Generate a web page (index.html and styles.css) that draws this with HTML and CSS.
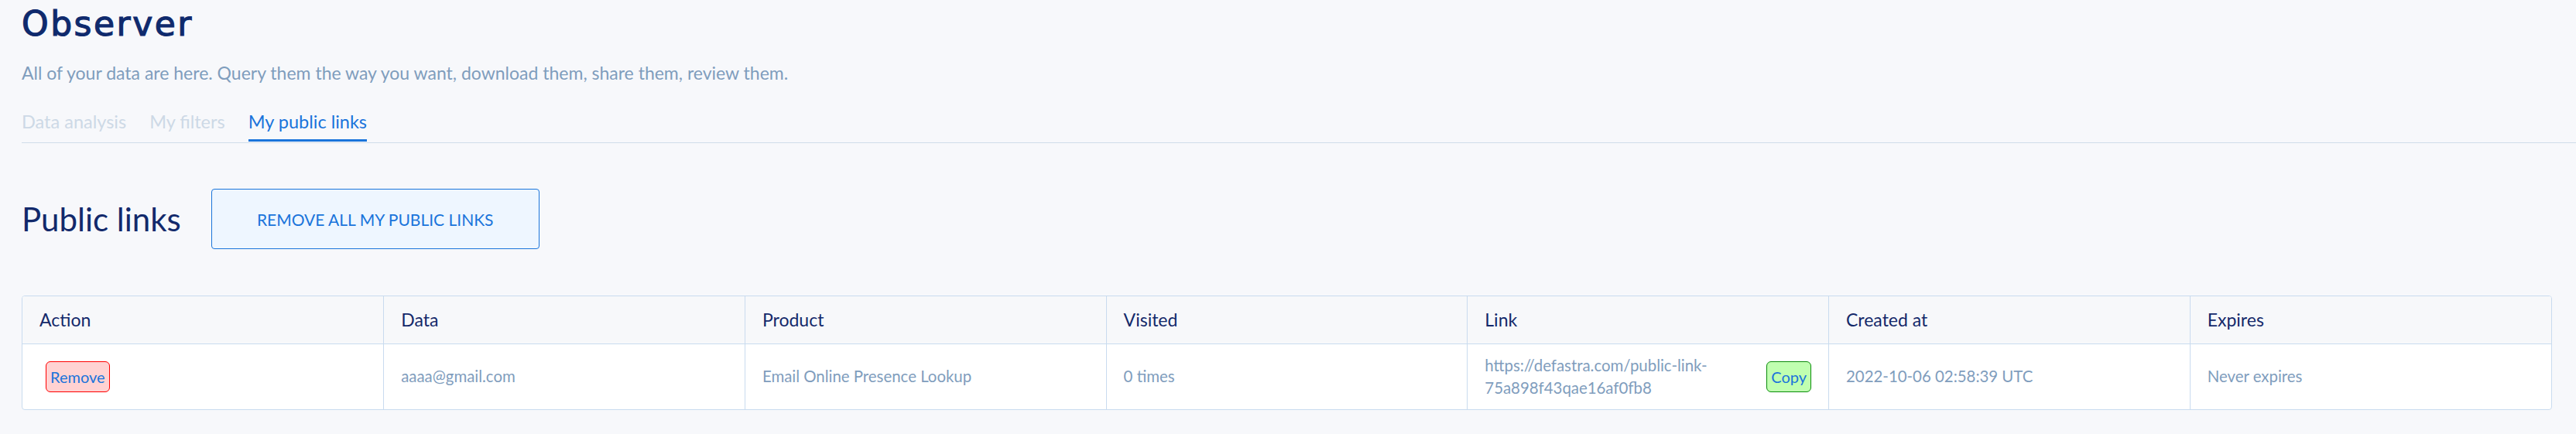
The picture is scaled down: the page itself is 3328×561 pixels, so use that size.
FILE: index.html
```html
<!DOCTYPE html>
<html lang="en">
<head>
<meta charset="utf-8">
<title>Observer</title>
<link rel="stylesheet" href="styles.css">
</head>
<body>
<main class="page">
  <header class="page-head">
    <h1 class="title">Observer</h1>
    <p class="subtitle">All of your data are here. Query them the way you want, download them, share them, review them.</p>
    <nav class="tabs">
      <a class="tab">Data analysis</a>
      <a class="tab">My filters</a>
      <a class="tab active">My public links</a>
    </nav>
  </header>

  <section class="links">
    <div class="links-head">
      <h2 class="links-title">Public links</h2>
      <button class="btn-remove-all">REMOVE ALL MY PUBLIC LINKS</button>
    </div>

    <div class="table-wrap">
      <table class="links-table">
        <thead>
          <tr>
            <th>Action</th>
            <th>Data</th>
            <th>Product</th>
            <th>Visited</th>
            <th>Link</th>
            <th>Created at</th>
            <th>Expires</th>
          </tr>
        </thead>
        <tbody>
          <tr>
            <td><button class="btn-remove">Remove</button></td>
            <td>aaaa@gmail.com</td>
            <td>Email Online Presence Lookup</td>
            <td>0 times</td>
            <td>
              <div class="link-cell">
                <span class="link-text">https://defastra.com/public-link-<br>75a898f43qae16af0fb8</span>
                <button class="btn-copy">Copy</button>
              </div>
            </td>
            <td>2022-10-06 02:58:39 UTC</td>
            <td>Never expires</td>
          </tr>
        </tbody>
      </table>
    </div>
  </section>
</main>
</body>
</html>
```

FILE: styles.css
```css
* { box-sizing: border-box; }

html, body {
  margin: 0;
  padding: 0;
  background: #f7f8fb;
}

body {
  font-family: Lato, "Noto Sans", sans-serif;
  color: #809dbd;
}

.page {
  padding: 0 31px 0 28px;
}

.title {
  margin: 6px 0 0;
  font-family: "DejaVu Sans", sans-serif;
  font-weight: normal;
  font-size: 44px;
  line-height: 50px;
  color: #0f2a6d;
  letter-spacing: 2.5px;
  -webkit-text-stroke: 1.2px #0f2a6d;
}

.subtitle {
  margin: 23px 0 0;
  font-size: 23px;
  line-height: 30px;
  color: #7f9dbd;
}

.tabs {
  display: flex;
  gap: 30px;
  margin: 33px -31px 0 0;
  border-bottom: 1px solid #d0dcea;
}

.tab {
  font-size: 23.5px;
  line-height: 30px;
  color: #cdd9e6;
  padding-bottom: 8px;
  border-bottom: 3px solid transparent;
  margin-bottom: 1px;
}

.tab.active {
  color: #1a74db;
  border-bottom-color: #1a74db;
}

.links-head {
  display: flex;
  align-items: center;
  gap: 39px;
  margin-top: 59px;
}

.links-title {
  margin: 0;
  font-size: 42px;
  font-weight: normal;
  line-height: 50px;
  color: #12296b;
}

.btn-remove-all {
  height: 78px;
  width: 424px;
  background: #eef6ff;
  border: 1px solid #1a74db;
  border-radius: 4px;
  color: #1a74db;
  font-family: Lato, sans-serif;
  font-size: 21px;
  padding: 0;
}

.table-wrap {
  margin-top: 60px;
  border: 1px solid #c9dbef;
  border-radius: 4px;
  overflow: hidden;
  background: #fff;
}

.links-table {
  width: 100%;
  border-collapse: collapse;
  table-layout: fixed;
}

.links-table th,
.links-table td {
  border-left: 1px solid #c9dbef;
  text-align: left;
  vertical-align: middle;
  padding: 13px 22px;
}

.links-table th:first-child,
.links-table td:first-child {
  border-left: none;
}

.links-table th {
  background: #f7f8fa;
  border-bottom: 1px solid #c9dbef;
  height: 61px;
  font-weight: normal;
  font-size: 23px;
  color: #14296a;
  padding-top: 0;
  padding-bottom: 0;
}

.links-table td {
  font-size: 20.4px;
  line-height: 29px;
  color: #809dbd;
  padding-top: 13px;
  padding-bottom: 13px;
}

.btn-remove {
  margin-left: 8px;
  height: 40px;
  padding: 0 5px;
  background: #ffd2d2;
  border: 1px solid #ff0000;
  border-radius: 6px;
  color: #1a74db;
  font-family: Lato, sans-serif;
  font-size: 20px;
}

.link-cell {
  display: flex;
  align-items: center;
  justify-content: space-between;
  gap: 10px;
}

.btn-copy {
  height: 40px;
  padding: 0 5px;
  background: #c0ffb0;
  border: 1px solid #0a8a0a;
  border-radius: 6px;
  color: #1a74db;
  font-family: Lato, sans-serif;
  font-size: 20px;
}
```
